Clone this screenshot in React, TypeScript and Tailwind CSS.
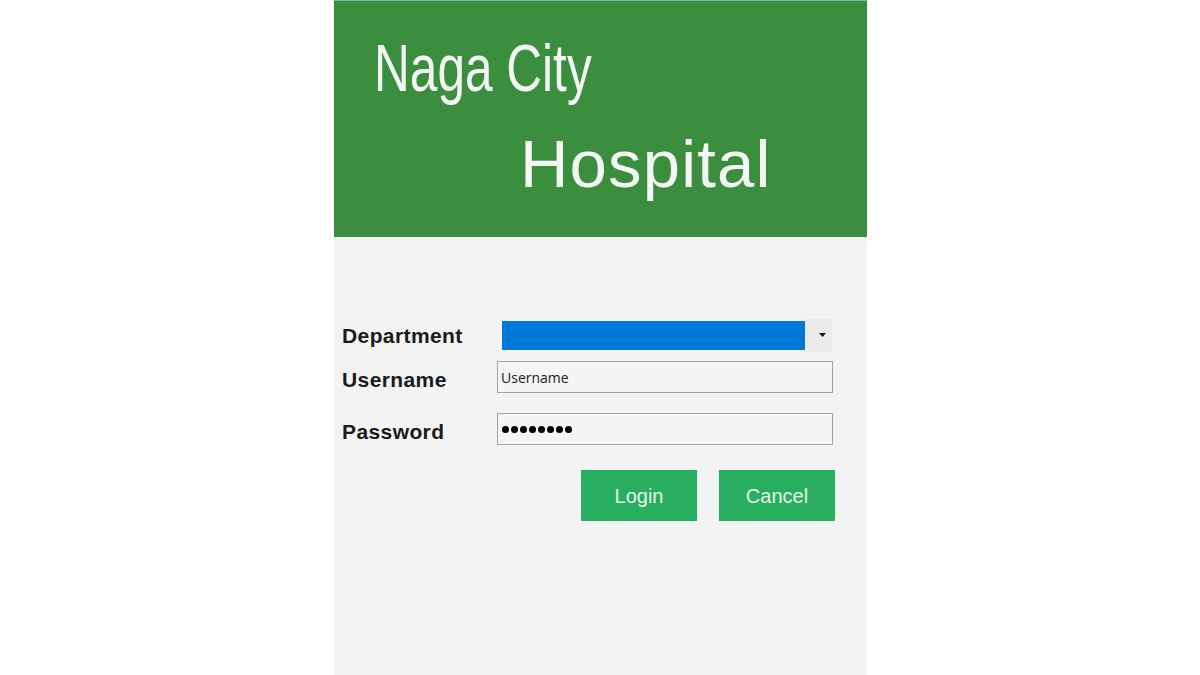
import React from "react";

export default function App() {
  return (
    <div className="w-[1200px] h-[675px] bg-white flex justify-center" style={{ fontFamily: '"Liberation Sans", Arial, sans-serif' }}>
      <div className="w-[533px] h-[675px] ml-[1px] bg-[#f3f3f3] flex flex-col">
        <div className="h-[1px] bg-[#7fb8a8]" />
        <div className="h-[236px] bg-[#3a8e3e] relative text-[#f4f6f4]">
          <div className="pt-[27px] pl-[40px] text-[67px] leading-[80px] whitespace-nowrap">
            <span className="inline-block origin-left scale-x-[0.74]">Naga City</span>
          </div>
          <div className="pt-[16px] pl-[186px] text-[67px] leading-[80px] tracking-[1.2px] whitespace-nowrap">Hospital</div>
        </div>
        <div className="pt-[81px] pl-[8px] text-[#1a1a1a]">
          <div className="flex items-center h-[34px]">
            <div className="w-[160px] text-[21px] font-bold tracking-[0.4px] pt-[2px]">Department</div>
            <div className="w-[303px] h-[29px] bg-[#0078d7]" />
            <div className="w-[27px] h-[33px] bg-[#ebebeb] flex items-center justify-end pr-[6px]">
              <svg width="7" height="4" viewBox="0 0 7 4"><path d="M0 0H7L3.5 4Z" fill="#111" /></svg>
            </div>
          </div>
          <div className="flex items-center mt-[9px] h-[32px]">
            <div className="w-[155px] text-[21px] font-bold tracking-[0.4px] pt-[6px]">Username</div>
            <div className="w-[336px] h-[32px] border border-[#a3a3a3] bg-[#f5f5f5] flex items-center pl-[3px] text-[14px] text-[#222]" style={{ fontFamily: '"Open Sans", sans-serif' }}>Username</div>
          </div>
          <div className="flex items-center mt-[20px] h-[32px]">
            <div className="w-[155px] text-[21px] font-bold tracking-[0.4px] pt-[6px]">Password</div>
            <div className="w-[336px] h-[32px] border border-[#a3a3a3] bg-[#f5f5f5] flex items-center pl-[4px] gap-[2px]">
              {Array.from({ length: 8 }).map((_, i) => (
                <span key={i} className="w-[7px] h-[7px] rounded-full bg-black" />
              ))}
            </div>
          </div>
          <div className="flex mt-[25px] pl-[239px] gap-[22px]">
            <div className="w-[116px] h-[51px] bg-[#27ae60] flex items-center justify-center text-[20px] text-[#e6f5e6]">Login</div>
            <div className="w-[116px] h-[51px] bg-[#27ae60] flex items-center justify-center text-[20px] text-[#e6f5e6]">Cancel</div>
          </div>
        </div>
      </div>
    </div>
  );
}
